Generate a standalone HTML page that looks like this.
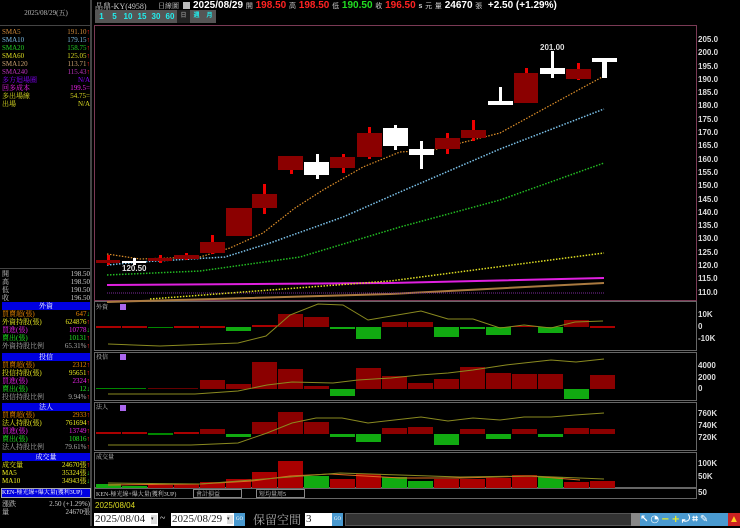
<!DOCTYPE html>
<html><head><meta charset="utf-8"><style>
*{margin:0;padding:0;box-sizing:border-box}
body{width:740px;height:526px;background:#000;overflow:hidden;position:relative;font-family:"Liberation Serif","Noto Serif CJK SC",serif;font-size:7px;color:#ccc}
.a{position:absolute;white-space:nowrap}
.r{position:absolute;left:2px;width:88px;height:8px;line-height:8px;font-size:7px}
.r span{float:right}
.hd{position:absolute;left:2px;width:88px;height:8px;background:#0000e0;color:#fff;text-align:center;line-height:8px;font-size:7px}
.b{position:absolute;top:10px;height:13px;width:13px;background:#555;color:#2ee;font:bold 8px "Liberation Sans",sans-serif;text-align:center;line-height:13px}
.ax{position:absolute;left:698px;color:#ddd;font:bold 8px "Liberation Sans",sans-serif}
</style></head><body>
<div class="a" style="left:0;top:0;width:92px;height:526px;background:#000;border-right:2px solid #444"></div>
<div class="a" style="left:0;top:8px;width:92px;text-align:center;color:#bbb;font-size:7px">2025/08/29(五)</div>
<div class="a" style="left:0;top:25px;width:92px;border-top:1px solid #444"></div>
<div class="r" style="top:28px;color:#d08a3a">SMA5<span>191.10<b style="color:#f22">↑</b></span></div>
<div class="r" style="top:36px;color:#7ab8e0">SMA10<span>179.15<b style="color:#f22">↑</b></span></div>
<div class="r" style="top:44px;color:#2c2">SMA20<span>158.75<b style="color:#f22">↑</b></span></div>
<div class="r" style="top:52px;color:#dd2">SMA60<span>125.05<b style="color:#f22">↑</b></span></div>
<div class="r" style="top:60px;color:#c9a070">SMA120<span>113.71<b style="color:#f22">↑</b></span></div>
<div class="r" style="top:68px;color:#b3b">SMA240<span>115.43<b style="color:#f22">↑</b></span></div>
<div class="r" style="top:76px;color:#80f">多方迴場圈<span>N/A</span></div>
<div class="r" style="top:84px;color:#e2e">回多成本<span>199.5=</span></div>
<div class="r" style="top:92px;color:#dd2">多出場線<span>54.75=</span></div>
<div class="r" style="top:100px;color:#dd2">出場<span>N/A</span></div>
<div class="a" style="left:0;top:268px;width:92px;border-top:1px solid #444"></div>
<div class="r" style="top:270px;color:#ccc">開<span>198.50</span></div>
<div class="r" style="top:278px;color:#ccc">高<span>198.50</span></div>
<div class="r" style="top:286px;color:#ccc">低<span>190.50</span></div>
<div class="r" style="top:294px;color:#ccc">收<span>196.50</span></div>
<div class="hd" style="top:302px">外資</div>
<div class="r" style="top:310px;color:#e80">買賣超(張)<span>647<b style="color:#2c2">↓</b></span></div>
<div class="r" style="top:318px;color:#ee2">外資持股(張)<span>624876<b style="color:#f22">↑</b></span></div>
<div class="r" style="top:326px;color:#e2e">買進(張)<span>10778<b style="color:#2c2">↓</b></span></div>
<div class="r" style="top:334px;color:#2e2">賣出(張)<span>10131<b style="color:#f22">↑</b></span></div>
<div class="r" style="top:342px;color:#aaa">外資持股比例<span>65.31%<b style="color:#f22">↑</b></span></div>
<div class="hd" style="top:353px">投信</div>
<div class="r" style="top:361px;color:#e80">買賣超(張)<span>2312<b style="color:#f22">↑</b></span></div>
<div class="r" style="top:369px;color:#ee2">投信持股(張)<span>95651<b style="color:#f22">↑</b></span></div>
<div class="r" style="top:377px;color:#e2e">買進(張)<span>2324<b style="color:#f22">↑</b></span></div>
<div class="r" style="top:385px;color:#2e2">賣出(張)<span>12<b style="color:#2c2">↓</b></span></div>
<div class="r" style="top:393px;color:#aaa">投信持股比例<span>9.94%<b style="color:#f22">↑</b></span></div>
<div class="hd" style="top:403px">法人</div>
<div class="r" style="top:411px;color:#e80">買賣超(張)<span>2933<b style="color:#f22">↑</b></span></div>
<div class="r" style="top:419px;color:#ee2">法人持股(張)<span>761694<b style="color:#f22">↑</b></span></div>
<div class="r" style="top:427px;color:#e2e">買進(張)<span>13749<b style="color:#f22">↑</b></span></div>
<div class="r" style="top:435px;color:#2e2">賣出(張)<span>10816<b style="color:#f22">↑</b></span></div>
<div class="r" style="top:443px;color:#aaa">法人持股比例<span>79.61%<b style="color:#f22">↑</b></span></div>
<div class="hd" style="top:453px">成交量</div>
<div class="r" style="top:461px;color:#ee2">成交量<span>24670張<b style="color:#f22">↑</b></span></div>
<div class="r" style="top:469px;color:#ee2">MA5<span>35324張<b style="color:#2c2">↓</b></span></div>
<div class="r" style="top:477px;color:#ee2">MA10<span>34943張<b style="color:#2c2">↓</b></span></div>
<div class="a" style="left:1px;top:488px;width:90px;height:10px;background:#0000e0;border:1px solid #aaa;color:#fff;font-size:6px;line-height:8px;overflow:hidden">KEN-極光線+爆大量(獲利3UP)</div>
<div class="r" style="top:500px;color:#ccc">漲跌<span>2.50 (+1.29%)</span></div>
<div class="r" style="top:508px;color:#ccc">量<span>24670張</span></div>

<div class="a" style="left:95px;top:1px;color:#ccc;font-size:8px">晶鼎-KY(4958)</div>
<div class="a" style="left:158px;top:1px;color:#ccc;font-size:7px">日線圖</div>
<div class="a" style="left:183px;top:2px;width:7px;height:7px;background:#bbb"></div>
<div class="a" style="left:193px;top:0;font:bold 10px 'Liberation Sans',sans-serif;color:#fff">2025/08/29 <span style="font-size:7px;color:#ccc;font-weight:normal">開</span> <span style="color:#f22">198.50</span> <span style="font-size:7px;color:#ccc;font-weight:normal">高</span> <span style="color:#f22">198.50</span> <span style="font-size:7px;color:#ccc;font-weight:normal">低</span> <span style="color:#2d2">190.50</span> <span style="font-size:7px;color:#ccc;font-weight:normal">收</span> <span style="color:#f22">196.50</span> <span style="font-size:7px;color:#ccc">s</span> <span style="font-size:7px;color:#ccc;font-weight:normal">元</span> <span style="font-size:7px;color:#ccc;font-weight:normal">量</span> 24670 <span style="font-size:7px;color:#ccc;font-weight:normal">張</span> &nbsp;+2.50 (+1.29%)</div>
<div class="b" style="left:95px">1</div><div class="b" style="left:108px">5</div><div class="b" style="left:121px;width:14px">10</div><div class="b" style="left:135px;width:14px">15</div><div class="b" style="left:149px;width:14px">30</div><div class="b" style="left:163px;width:14px">60</div>
<div class="b" style="left:177px;background:#222;color:#888;font-size:6px">日</div><div class="b" style="left:190px;font-size:6px">週</div><div class="b" style="left:203px;font-size:6px">月</div>

<svg class="a" style="left:0;top:0" width="740" height="526">
<rect x="94.5" y="25.5" width="602" height="275" fill="none" stroke="#7a3a55"/>
<rect x="94.5" y="301.5" width="602" height="49" fill="none" stroke="#666"/>
<rect x="94.5" y="352.5" width="602" height="48" fill="none" stroke="#666"/>
<rect x="94.5" y="402.5" width="602" height="48" fill="none" stroke="#666"/>
<rect x="94.5" y="452.5" width="602" height="35" fill="none" stroke="#666"/>
<rect x="94.5" y="488.5" width="602" height="10" fill="none" stroke="#666"/>
<polyline fill="none" stroke="#aa7a40" stroke-width="2" points="107,302 390,294 604,283"/>
<polyline fill="none" stroke="#7a2a9a" stroke-width="1" stroke-dasharray="1,1" points="107,293 604,293"/>
<polyline fill="none" stroke="#e020e0" stroke-width="2" points="107,285 390,283 604,278"/>
<polyline fill="none" stroke="#dd2" stroke-width="1.5" stroke-dasharray="1.5,1.5" points="150,299 390,281 604,253"/>
<polyline fill="none" stroke="#2b2" stroke-width="1.5" stroke-dasharray="1.5,1.5" points="107,275 200,271 300,257 400,227 500,200 604,163"/>
<polyline fill="none" stroke="#7ac0e8" stroke-width="1.5" stroke-dasharray="1.5,1.5" points="107,265 140,262 225,257 270,243 343,217 400,192 500,149 604,109"/>
<polyline fill="none" stroke="#e0902a" stroke-width="1.2" stroke-dasharray="1.5,1.5" points="107,254 140,259 200,257 230,248 263,233 295,208 323,190 363,167 400,152 433,150 500,133 560,100 604,76"/>
<g fill="#8b0000" stroke="none">
<rect x="107" y="255" width="3" height="10" fill="#e00"/><rect x="96" y="260" width="24" height="3"/>
<rect x="159" y="255" width="3" height="8" fill="#e00"/><rect x="148" y="258" width="24" height="3"/>
<rect x="185" y="253" width="3" height="7" fill="#e00"/><rect x="174" y="255" width="25" height="4"/>
<rect x="211" y="235" width="3" height="19" fill="#e00"/><rect x="200" y="242" width="25" height="11"/>
<rect x="226" y="208" width="26" height="28"/>
<rect x="263" y="184" width="3" height="30" fill="#e00"/><rect x="252" y="194" width="25" height="14"/>
<rect x="290" y="156" width="3" height="18" fill="#e00"/><rect x="278" y="156" width="25" height="14"/>
<rect x="342" y="154" width="3" height="19" fill="#e00"/><rect x="330" y="157" width="25" height="11"/>
<rect x="368" y="127" width="3" height="32" fill="#e00"/><rect x="357" y="133" width="25" height="24"/>
<rect x="446" y="133" width="3" height="21" fill="#e00"/><rect x="435" y="138" width="25" height="11"/>
<rect x="472" y="120" width="3" height="21" fill="#e00"/><rect x="461" y="130" width="25" height="8"/>
<rect x="525" y="68" width="3" height="35" fill="#e00"/><rect x="514" y="73" width="24" height="30"/>
<rect x="577" y="63" width="3" height="17" fill="#e00"/><rect x="566" y="69" width="25" height="10"/>
</g>
<g fill="#fff">
<rect x="133" y="258" width="3" height="7"/><rect x="122" y="261" width="24" height="2"/>
<rect x="316" y="154" width="3" height="25"/><rect x="304" y="162" width="25" height="13"/>
<rect x="394" y="125" width="3" height="25"/><rect x="383" y="128" width="25" height="18"/>
<rect x="420" y="141" width="3" height="28"/><rect x="409" y="149" width="25" height="6"/>
<rect x="499" y="87" width="3" height="18"/><rect x="488" y="101" width="25" height="4"/>
<rect x="551" y="51" width="3" height="27"/><rect x="540" y="68" width="25" height="6"/>
<rect x="602" y="58" width="5" height="20"/><rect x="592" y="58" width="25" height="4"/>
</g>
<text x="122" y="271" fill="#ddd" font-family="Liberation Sans" font-size="8" font-weight="bold">120.50</text>
<text x="540" y="50" fill="#ddd" font-family="Liberation Sans" font-size="8" font-weight="bold">201.00</text>
<g font-family="Liberation Serif,Noto Serif CJK SC" font-size="6" fill="#ccc"><text x="96" y="309">外資</text><text x="96" y="359">投信</text><text x="96" y="409">法人</text><text x="96" y="459">成交量</text>
<text x="96" y="496">KEN-極光線+爆大量(獲利3UP)</text><text x="196" y="496">會計損益</text><text x="259" y="496">短均量周5</text></g>
<rect x="193.5" y="489.5" width="48" height="8" fill="none" stroke="#888"/><rect x="256.5" y="489.5" width="48" height="8" fill="none" stroke="#888"/>
<rect x="120" y="304" width="6" height="6" fill="#a6e"/><rect x="120" y="354" width="6" height="6" fill="#a6e"/><rect x="120" y="405" width="6" height="6" fill="#a6e"/>
<g>
<rect x="96" y="326" width="25" height="2" fill="#a00"/><rect x="122" y="326" width="25" height="2" fill="#a00"/><rect x="148" y="327" width="25" height="1" fill="#080"/><rect x="174" y="326" width="25" height="2" fill="#a00"/><rect x="200" y="326" width="25" height="2" fill="#a00"/>
<rect x="226" y="327" width="25" height="4" fill="#1a1"/><rect x="252" y="325" width="25" height="2" fill="#a00"/><rect x="278" y="314" width="25" height="13" fill="#8b0000"/><rect x="304" y="317" width="25" height="10" fill="#8b0000"/><rect x="330" y="327" width="25" height="2" fill="#1a1"/>
<rect x="356" y="327" width="25" height="12" fill="#1a1"/><rect x="382" y="322" width="25" height="5" fill="#8b0000"/><rect x="408" y="322" width="25" height="5" fill="#8b0000"/><rect x="434" y="327" width="25" height="10" fill="#1a1"/><rect x="460" y="327" width="25" height="2" fill="#1a1"/>
<rect x="486" y="327" width="25" height="8" fill="#1a1"/><rect x="512" y="326" width="25" height="1" fill="#a00"/><rect x="538" y="327" width="25" height="6" fill="#1a1"/><rect x="564" y="320" width="25" height="7" fill="#8b0000"/><rect x="590" y="326" width="25" height="2" fill="#a00"/>
</g>
<polyline fill="none" stroke="#8a8a20" points="108,344 160,346 238,343 266,336 290,315 318,304 343,305 368,320 421,311 448,319 473,319 500,328 524,325 551,328 575,322 603,321"/>
<rect x="96" y="388" width="50" height="1" fill="#080"/><rect x="148" y="388" width="50" height="1" fill="#600"/>
<g fill="#8b0000"><rect x="200" y="380" width="25" height="9"/><rect x="226" y="384" width="25" height="5"/><rect x="252" y="362" width="25" height="27"/><rect x="278" y="369" width="25" height="20"/><rect x="304" y="386" width="25" height="3"/>
<rect x="356" y="368" width="25" height="21"/><rect x="382" y="376" width="25" height="13"/><rect x="408" y="383" width="25" height="6"/><rect x="434" y="379" width="25" height="10"/><rect x="460" y="367" width="25" height="22"/><rect x="486" y="373" width="25" height="16"/><rect x="512" y="374" width="25" height="15"/><rect x="538" y="374" width="25" height="15"/><rect x="590" y="375" width="25" height="14"/></g>
<rect x="330" y="389" width="25" height="7" fill="#1a1"/><rect x="564" y="389" width="25" height="10" fill="#1a1"/>
<polyline fill="none" stroke="#8a8a20" points="108,394 195,394 238,391 267,385 292,382 333,383 358,380 391,378 420,375 448,373 473,370 506,365 551,360 576,362 604,359"/>
<g fill="#a00"><rect x="96" y="432" width="25" height="2"/><rect x="122" y="432" width="25" height="2"/><rect x="174" y="432" width="25" height="2"/></g>
<rect x="148" y="433" width="25" height="2" fill="#080"/>
<g fill="#8b0000"><rect x="200" y="429" width="25" height="5"/><rect x="252" y="422" width="25" height="12"/><rect x="278" y="412" width="25" height="22"/><rect x="304" y="422" width="25" height="12"/><rect x="382" y="428" width="25" height="6"/><rect x="408" y="427" width="25" height="7"/><rect x="460" y="429" width="25" height="5"/><rect x="512" y="429" width="25" height="5"/><rect x="564" y="428" width="25" height="6"/><rect x="590" y="429" width="25" height="5"/></g>
<g fill="#1a1"><rect x="226" y="434" width="25" height="3"/><rect x="330" y="434" width="25" height="3"/><rect x="356" y="434" width="25" height="8"/><rect x="434" y="434" width="25" height="11"/><rect x="486" y="434" width="25" height="5"/><rect x="538" y="434" width="25" height="3"/></g>
<polyline fill="none" stroke="#8a8a20" points="108,445 191,445 238,443 267,433 292,423 316,418 342,418 368,423 421,417 448,421 473,418 500,420 524,417 551,417 575,415 604,413"/>
<g fill="#1a1"><rect x="96" y="484" width="25" height="4"/><rect x="122" y="486" width="25" height="2"/><rect x="304" y="476" width="25" height="12"/><rect x="382" y="477" width="25" height="11"/><rect x="408" y="481" width="25" height="7"/><rect x="538" y="477" width="25" height="11"/></g>
<g fill="#a00"><rect x="148" y="485" width="25" height="3"/><rect x="174" y="484" width="25" height="4"/><rect x="200" y="482" width="25" height="6"/><rect x="226" y="479" width="25" height="9"/><rect x="252" y="472" width="25" height="16"/><rect x="278" y="461" width="25" height="27"/><rect x="330" y="479" width="25" height="9"/><rect x="356" y="474" width="25" height="14"/><rect x="434" y="479" width="25" height="9"/><rect x="460" y="479" width="25" height="9"/><rect x="486" y="478" width="25" height="10"/><rect x="512" y="475" width="25" height="13"/><rect x="564" y="482" width="25" height="6"/><rect x="590" y="481" width="25" height="7"/></g>
<polyline fill="none" stroke="#e06a20" points="108,485 200,484 252,481 290,476 330,474 400,478 460,478 530,476 580,480"/>
<polyline fill="none" stroke="#8a8a20" points="108,483 200,484 290,477 340,473 400,475 460,477 530,476 604,479"/>
</svg>
<div class="ax" style="top:35px">205.0</div><div class="ax" style="top:48px">200.0</div><div class="ax" style="top:62px">195.0</div><div class="ax" style="top:75px">190.0</div><div class="ax" style="top:88px">185.0</div><div class="ax" style="top:101px">180.0</div><div class="ax" style="top:115px">175.0</div><div class="ax" style="top:128px">170.0</div><div class="ax" style="top:141px">165.0</div><div class="ax" style="top:155px">160.0</div><div class="ax" style="top:168px">155.0</div><div class="ax" style="top:181px">150.0</div><div class="ax" style="top:195px">145.0</div><div class="ax" style="top:208px">140.0</div><div class="ax" style="top:221px">135.0</div><div class="ax" style="top:234px">130.0</div><div class="ax" style="top:248px">125.0</div><div class="ax" style="top:261px">120.0</div><div class="ax" style="top:274px">115.0</div><div class="ax" style="top:288px">110.0</div>
<div class="ax" style="top:310px">10K</div><div class="ax" style="top:322px">0</div><div class="ax" style="top:334px">-10K</div>
<div class="ax" style="top:361px">4000</div><div class="ax" style="top:373px">2000</div><div class="ax" style="top:384px">0</div>
<div class="ax" style="top:409px">760K</div><div class="ax" style="top:421px">740K</div><div class="ax" style="top:433px">720K</div>
<div class="ax" style="top:459px">100K</div><div class="ax" style="top:472px">50K</div><div class="ax" style="top:488px">50</div>
<div class="a" style="left:95px;top:501px;color:#dd2;font:8px 'Liberation Sans',sans-serif">2025/08/04</div>
<div class="a" style="left:94px;top:513px;width:64px;height:13px;background:#fff;color:#222;font:11px 'Liberation Serif',serif;line-height:13px;padding-left:1px">2025/08/04<span style="position:absolute;right:1px;top:2px;width:6px;height:9px;background:#ddd;font-size:5px;line-height:9px">▾</span></div>
<div class="a" style="left:160px;top:513px;color:#ddd;font-size:10px">~</div>
<div class="a" style="left:171px;top:513px;width:63px;height:13px;background:#fff;color:#222;font:11px 'Liberation Serif',serif;line-height:13px;padding-left:1px">2025/08/29<span style="position:absolute;right:1px;top:2px;width:6px;height:9px;background:#ddd;font-size:5px;line-height:9px">▾</span></div>
<div class="a" style="left:234px;top:513px;width:11px;height:13px;background:#4a9ad0;color:#fff;font-size:5px;line-height:13px;text-align:center">GO</div>
<div class="a" style="left:253px;top:511px;color:#aaa;font:12px 'Noto Serif CJK SC',serif">保留空間</div>
<div class="a" style="left:305px;top:513px;width:27px;height:13px;background:#fff;color:#222;font:11px 'Liberation Serif',serif;line-height:13px;padding-left:1px">3</div>
<div class="a" style="left:332px;top:513px;width:11px;height:13px;background:#4a9ad0;color:#fff;font-size:5px;line-height:13px;text-align:center">GO</div>
<div class="a" style="left:345px;top:513px;width:295px;height:13px;background:#333;border:1px solid #555"></div>
<div class="a" style="left:631px;top:513px;width:9px;height:13px;background:#888"></div>
<div class="a" style="left:640px;top:513px;width:88px;height:13px;background:#4a9ad0;color:#fff;font:bold 10px 'DejaVu Sans',sans-serif;line-height:13px;letter-spacing:2px">↖<span style="color:#fff">◔</span><span style="color:#ee2">−+</span>⤾⌗✎</div>
<div class="a" style="left:728px;top:513px;width:12px;height:13px;background:#c22;color:#fc2;font-size:10px;line-height:13px;text-align:center">▲</div>
</body></html>
